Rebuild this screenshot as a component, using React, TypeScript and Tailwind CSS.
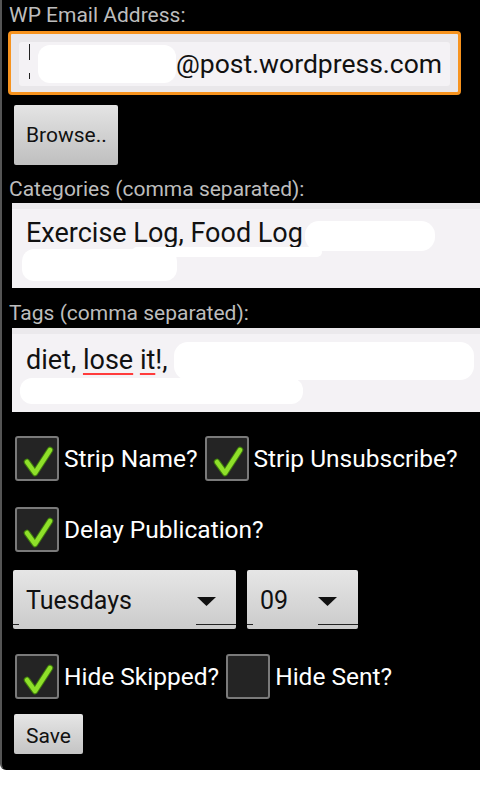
import type { ReactNode } from "react";

function Check() {
  return (
    <svg width="40" height="41" viewBox="0 0 40 41" className="absolute left-0 top-0">
      <path d="M10 24 L18 35 L33 12" fill="none" stroke="#3f7d0c" strokeWidth="6.5" strokeLinecap="round" strokeLinejoin="round" />
      <path d="M10 24 L18 35 L33 12" fill="none" stroke="#8fe02a" strokeWidth="4.5" strokeLinecap="round" strokeLinejoin="round" />
    </svg>
  );
}

function CheckBox({ checked, label }: { checked: boolean; label: string }) {
  return (
    <div className="flex items-center">
      <div className="relative w-[44px] h-[45px] rounded-[3px] border-2 border-[#7a7a7a] bg-[#242424]">
        {checked && <Check />}
      </div>
      <span className="ml-[5px] text-[24.5px] leading-[30px] text-white">{label}</span>
    </div>
  );
}

function Label({ children }: { children: ReactNode }) {
  return <div className="text-[21px] leading-[24px] text-[#bdbdbd] pl-[7px]">{children}</div>;
}

function Spinner({ value, width, arrowLeft }: { value: string; width: string; arrowLeft: string }) {
  return (
    <div className={`relative h-[59px] ${width} bg-gradient-to-b from-[#e6e6e6] to-[#cbcbcb] rounded-[2px]`}>
      <span className="absolute left-[13px] top-[16px] text-[25px] leading-[30px] text-[#111]">{value}</span>
      <svg width="19" height="9" viewBox="0 0 19 9" className={`absolute ${arrowLeft} top-[27px]`}>
        <path d="M0 0 L19 0 L9.5 9 Z" fill="#111" />
      </svg>
      <div className="absolute left-0 bottom-[4px] w-[6px] h-px bg-[#222]" />
      <div className="absolute right-0 bottom-[4px] w-[40px] h-px bg-[#222]" />
    </div>
  );
}

export default function App() {
  return (
    <div className="w-[480px] h-[800px] bg-white" style={{ fontFamily: "Roboto, 'Liberation Sans', sans-serif" }}>
      <div className="h-[770px] bg-black border-l-2 border-[#555] rounded-bl-[6px] pt-[3px] flex flex-col">
        <Label>WP Email Address:</Label>
        <div className="mt-[4px] ml-[6px] w-[453px] h-[64px] rounded-[4px] border-[3px] border-[#f7931e] bg-[#e9e7ea] p-[8px]">
          <div className="relative h-[44px] bg-[#f4f2f5] rounded-[3px] flex items-center">
            <div className="absolute left-[10px] top-[2px] w-px h-[16px] bg-[#222]" />
            <div className="absolute left-[10px] top-[31px] w-px h-[6px] bg-[#222]" />
            <div className="absolute left-[19px] top-[3px] w-[138px] h-[38px] bg-white rounded-[12px]" />
            <span className="ml-[157px] text-[26.5px] text-[#111] leading-none">@post.wordpress.com</span>
          </div>
        </div>
        <button className="mt-[10px] ml-[12px] w-[104px] h-[60px] bg-gradient-to-b from-[#e4e4e4] to-[#bfbfbf] rounded-[2px] text-[21px] text-[#111] text-left pl-[12px] pt-[2px]">
          Browse..
        </button>
        <div className="mt-[12px]">
          <Label>Categories (comma separated):</Label>
        </div>
        <div className="relative mt-[2px] ml-[10px] h-[85px] bg-[#f4f2f5] border-t-[6px] border-[#ebe9ec]">
          <span className="absolute left-[14px] top-[8px] text-[27px] leading-[32px] text-[#111]">Exercise Log, Food Log</span>
          <div className="absolute left-[293px] top-[12px] w-[130px] h-[30px] bg-white rounded-[14px]" />
          <div className="absolute left-[10px] top-[40px] w-[155px] h-[32px] bg-white rounded-[12px]" />
          <div className="absolute left-[120px] top-[38px] w-[190px] h-[10px] bg-white rounded-[6px]" />
        </div>
        <div className="mt-[13px]">
          <Label>Tags (comma separated):</Label>
        </div>
        <div className="relative mt-[3px] ml-[10px] h-[84px] bg-[#f4f2f5] border-t-[6px] border-[#ebe9ec]">
          <span className="absolute left-[14px] top-[10px] text-[27px] leading-[32px] text-[#111]">
            diet, <span className="underline decoration-[#ff3b3b] decoration-2 underline-offset-[4px]">lose</span>{" "}
            <span className="underline decoration-[#ff3b3b] decoration-2 underline-offset-[4px]">it</span>!,
          </span>
          <div className="absolute left-[162px] top-[8px] w-[300px] h-[38px] bg-white rounded-[14px]" />
          <div className="absolute left-[8px] top-[44px] w-[283px] h-[26px] bg-white rounded-[12px]" />
        </div>
        <div className="mt-[24px] ml-[13px] flex gap-[7px]">
          <CheckBox checked label="Strip Name?" />
          <CheckBox checked label="Strip Unsubscribe?" />
        </div>
        <div className="mt-[26px] ml-[13px] flex">
          <CheckBox checked label="Delay Publication?" />
        </div>
        <div className="mt-[18px] ml-[11px] flex gap-[11px]">
          <Spinner value="Tuesdays" width="w-[223px]" arrowLeft="left-[184px]" />
          <Spinner value="09" width="w-[111px]" arrowLeft="left-[71px]" />
        </div>
        <div className="mt-[25px] ml-[13px] flex gap-[7px]">
          <CheckBox checked label="Hide Skipped?" />
          <CheckBox checked={false} label="Hide Sent?" />
        </div>
        <button className="mt-[15px] ml-[12px] w-[69px] h-[40px] bg-gradient-to-b from-[#e6e6e6] to-[#c4c4c4] rounded-[2px] text-[21px] text-[#111] pt-[5px]">
          Save
        </button>
      </div>
    </div>
  );
}
